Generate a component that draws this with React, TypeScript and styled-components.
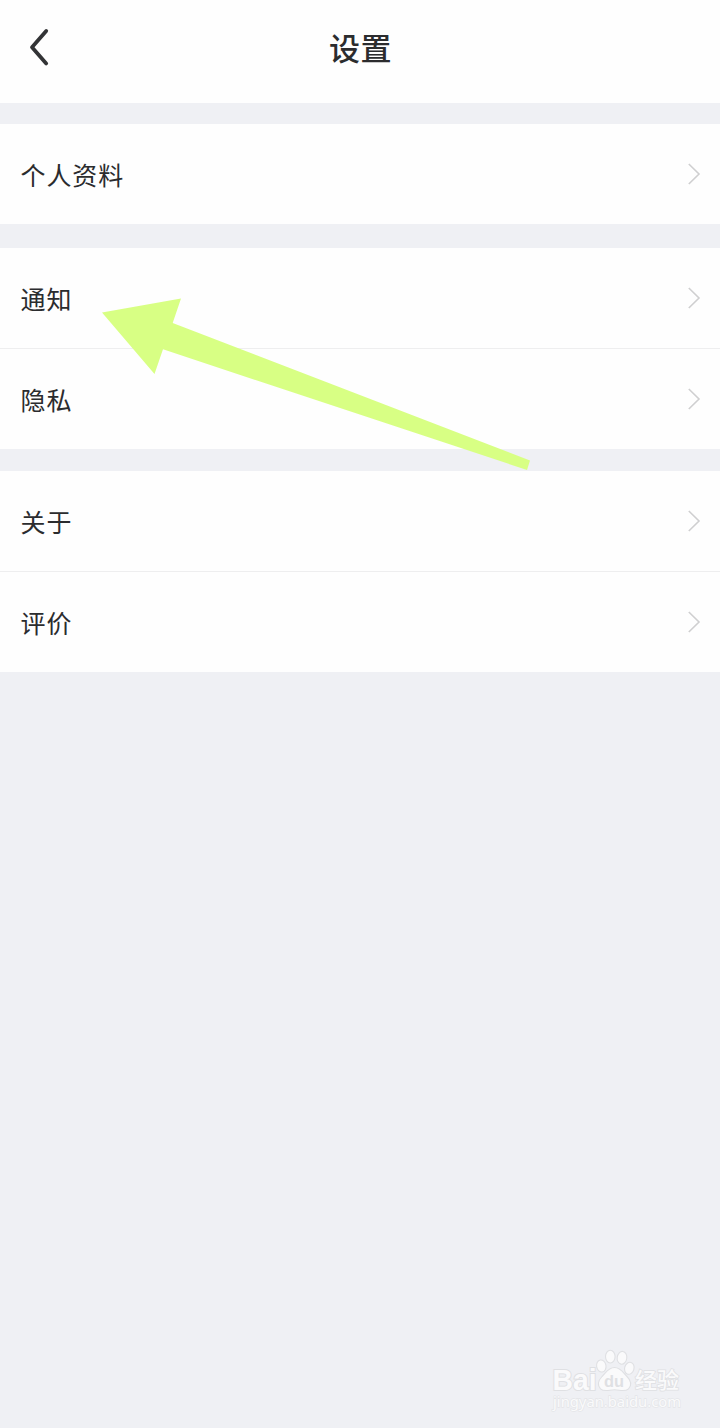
import React from "react";
import styled, { createGlobalStyle } from "styled-components";

const GlobalStyle = createGlobalStyle`
  body {
    margin: 0;
    background: #eff0f4;
    font-family: "Noto Sans CJK SC", "Noto Sans", sans-serif;
    color: #2b2c2e;
  }
`;

const Screen = styled.div`
  position: relative;
  display: flex;
  flex-direction: column;
  width: 720px;
  height: 1428px;
  overflow: hidden;
  background: #eff0f4;
`;

const Header = styled.header`
  display: grid;
  grid-template-columns: 80px 1fr 80px;
  align-items: center;
  box-sizing: border-box;
  height: 103px;
  padding-bottom: 7px;
  background: #fefefe;
`;

const BackButton = styled.button`
  display: flex;
  margin: 0 0 0 26px;
  padding: 0;
  width: 28px;
  border: 0;
  background: none;
`;

const Title = styled.h1`
  margin: 0;
  padding: 0 0 3px 1px;
  text-align: center;
  font-size: 31px;
  line-height: 44px;
  font-weight: 500;
  letter-spacing: 0.6px;
`;

const Group = styled.section<{ $gap: number }>`
  margin-top: ${(p) => p.$gap}px;
  background: #fefefe;
`;

const Row = styled.div`
  display: flex;
  align-items: center;
  justify-content: space-between;
  height: 100px;
  padding: 0 19px 0 20.5px;

  & + & {
    border-top: 1px solid #eeeeef;
  }
`;

const Label = styled.span`
  font-size: 25px;
  line-height: 36px;
  letter-spacing: 0.9px;
`;

const PointerArrow = styled.svg`
  position: absolute;
  left: 0;
  top: 0;
  pointer-events: none;
`;

const Watermark = styled.div`
  position: absolute;
  left: 548px;
  top: 1346px;
`;

const groups = [
  { gap: 21, items: ["个人资料"] },
  { gap: 24, items: ["通知", "隐私"] },
  { gap: 22, items: ["关于", "评价"] },
];

const BackIcon = () => (
  <svg width="28" height="44" viewBox="0 0 28 44" fill="none">
    <path d="M20.2 5 6 21.2 20.2 37.4" stroke="#333436" strokeWidth="3.8" strokeLinecap="round" strokeLinejoin="round" />
  </svg>
);

const Chevron = () => (
  <svg width="14" height="24" viewBox="0 0 14 24" fill="none">
    <path d="M1.8 2 12 12 1.8 22" stroke="#cfcfd0" strokeWidth="1.6" />
  </svg>
);

const WatermarkLogo = () => (
  <svg width="140" height="72" viewBox="0 0 140 72" fill="#fafafb" stroke="#dfe0e3" strokeWidth="1.1">
    <text x="4.5" y="43.5" fontSize="29" fontFamily="'Liberation Sans', sans-serif" fontWeight="700" paintOrder="stroke" textLength="44" lengthAdjust="spacingAndGlyphs" strokeWidth="2">Bai</text>
    <ellipse cx="53.3" cy="20" rx="4.7" ry="6.1" transform="rotate(-10 53.3 20)" />
    <ellipse cx="62.3" cy="10.6" rx="4.8" ry="6.4" />
    <ellipse cx="74" cy="11.8" rx="4.8" ry="6.4" transform="rotate(8 74 11.8)" />
    <ellipse cx="81.3" cy="22.3" rx="4.7" ry="6.1" transform="rotate(16 81.3 22.3)" />
    <path d="M66.5 21.5C72.5 21.5 75 26.5 79 30.5C83.2 34.8 84 39 80.5 42.8C77 46.3 71.5 43.8 66.5 43.8C61.5 43.8 56 46.3 52.5 42.8C49 39 50 34.8 54 30.5C58 26.5 60.5 21.5 66.5 21.5Z" />
    <text x="56" y="40.5" fontSize="16" fontFamily="'Liberation Sans', sans-serif" fontWeight="700" fill="#dfe0e3" stroke="none" textLength="20" lengthAdjust="spacingAndGlyphs">du</text>
    <text x="87" y="42.3" fontSize="22" fontFamily="'Noto Sans CJK SC', sans-serif" fontWeight="500" paintOrder="stroke" strokeWidth="1.6" textLength="44" lengthAdjust="spacingAndGlyphs">经验</text>
    <text x="5" y="61" fontSize="15" fontFamily="'Noto Sans', sans-serif" paintOrder="stroke" strokeWidth="1.3" stroke="#e4e5e8" textLength="128" lengthAdjust="spacingAndGlyphs">jingyan.baidu.com</text>
  </svg>
);

export default function App() {
  return (
    <>
      <GlobalStyle />
      <Screen>
        <Header>
          <BackButton aria-label="返回">
            <BackIcon />
          </BackButton>
          <Title>设置</Title>
        </Header>
        {groups.map((group) => (
          <Group key={group.items[0]} $gap={group.gap}>
            {group.items.map((item) => (
              <Row key={item}>
                <Label>{item}</Label>
                <Chevron />
              </Row>
            ))}
          </Group>
        ))}
        <PointerArrow width="720" height="500" viewBox="0 0 720 500">
          <path d="M102 312.5 181 298.5 172.7 323 530 460.5 527 470 163 349.3 154.5 374Z" fill="#d8ff84" />
        </PointerArrow>
        <Watermark>
          <WatermarkLogo />
        </Watermark>
      </Screen>
    </>
  );
}
